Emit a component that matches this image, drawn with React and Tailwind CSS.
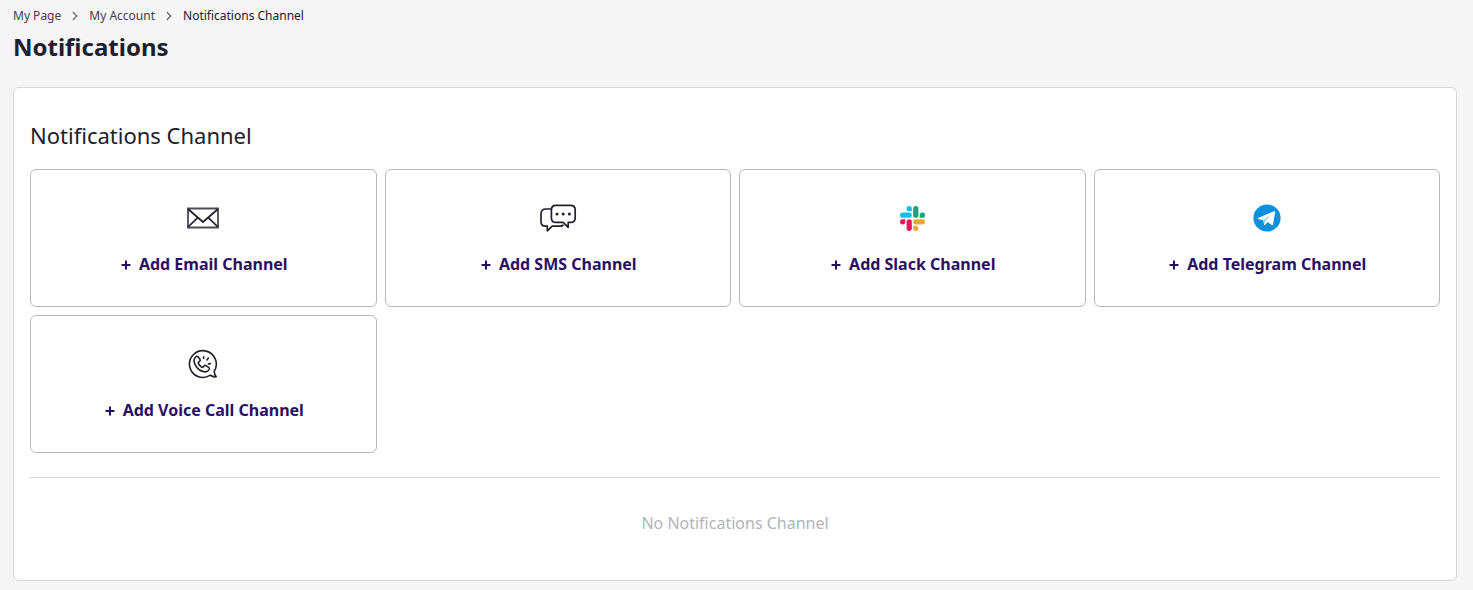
import React from "react";

function EmailIcon() {
  return (
    <svg width="34" height="24" viewBox="0 0 34 24" fill="none" aria-hidden="true">
      <path d="M2 2.500h30v19H2z" stroke="#4a4a55" strokeWidth="1.800" />
      <path
        d="M2 3l15 13L32 3M2 21l9.500-9.200M32 21l-9.500-9.200"
        stroke="#20202c"
        strokeWidth="1.700"
        strokeLinejoin="round"
      />
    </svg>
  );
}

function SmsIcon() {
  return (
    <svg
      width="38"
      height="30"
      viewBox="0 0 38 30"
      fill="none"
      stroke="#20202c"
      strokeWidth="1.700"
      strokeLinecap="round"
      strokeLinejoin="round"
      aria-hidden="true"
    >
      <path d="M12 6H7C3.500 6 2 7.800 2 11v7.500C2 21.500 3.500 23.200 6.500 23.200h1.800v4.600l5-4.600H21c1.300 0 2.200-.4 3-1" />
      <path d="M17 2.400h14.500c3.200 0 4.700 1.700 4.700 4.500v8c0 2.900-1.600 4.500-4.700 4.500h-2.300v4.900l-5-4.900H17c-3.100 0-4.600-1.600-4.600-4.500v-8c0-2.800 1.500-4.500 4.600-4.500z" />
      <g fill="#20202c" stroke="none">
        <circle cx="18" cy="11" r="1.500" />
        <circle cx="24.200" cy="11" r="1.500" />
        <circle cx="30.400" cy="11" r="1.500" />
      </g>
    </svg>
  );
}

function SlackIcon() {
  return (
    <svg width="25" height="25" viewBox="0 0 24 24" aria-hidden="true">
      <path
        fill="#e8175d"
        d="M5.042 15.165a2.528 2.528 0 0 1-2.520 2.523A2.528 2.528 0 0 1 0 15.165a2.527 2.527 0 0 1 2.522-2.520h2.520v2.520zM6.313 15.165a2.527 2.527 0 0 1 2.521-2.520 2.527 2.527 0 0 1 2.521 2.520v6.313A2.528 2.528 0 0 1 8.834 24a2.528 2.528 0 0 1-2.521-2.522v-6.313z"
      />
      <path
        fill="#12bfe8"
        d="M8.834 5.042a2.528 2.528 0 0 1-2.521-2.520A2.528 2.528 0 0 1 8.834 0a2.528 2.528 0 0 1 2.521 2.522v2.520H8.834zM8.834 6.313a2.528 2.528 0 0 1 2.521 2.521 2.528 2.528 0 0 1-2.521 2.521H2.522A2.528 2.528 0 0 1 0 8.834a2.528 2.528 0 0 1 2.522-2.521h6.312z"
      />
      <path
        fill="#0ea97a"
        d="M18.956 8.834a2.528 2.528 0 0 1 2.522-2.521A2.528 2.528 0 0 1 24 8.834a2.528 2.528 0 0 1-2.522 2.521h-2.522V8.834zM17.688 8.834a2.528 2.528 0 0 1-2.523 2.521 2.527 2.527 0 0 1-2.520-2.521V2.522A2.527 2.527 0 0 1 15.165 0a2.528 2.528 0 0 1 2.523 2.522v6.312z"
      />
      <path
        fill="#eca833"
        d="M15.165 18.956a2.528 2.528 0 0 1 2.523 2.522A2.528 2.528 0 0 1 15.165 24a2.527 2.527 0 0 1-2.520-2.522v-2.522h2.520zM15.165 17.688a2.527 2.527 0 0 1-2.520-2.523 2.526 2.526 0 0 1 2.520-2.520h6.313A2.527 2.527 0 0 1 24 15.165a2.528 2.528 0 0 1-2.522 2.523h-6.313z"
      />
    </svg>
  );
}

function TelegramIcon() {
  return (
    <svg width="28" height="28" viewBox="0 0 28 28" aria-hidden="true">
      <circle cx="14" cy="14" r="13.600" fill="#0a90dc" />
      <path
        fill="#fff"
        d="M5.200 14 L21.400 7.100 C22 6.900 22.300 7.200 22.200 7.800 L20 20.600 C19.900 21.200 19.400 21.400 18.900 21.100 L14.500 18 L12.300 20.700 C11.900 21.200 11.200 21 11.100 20.400 L10.200 16.300 L5.300 15 C4.600 14.800 4.600 14.300 5.200 14z"
      />
      <path fill="#8fcdf0" d="M10.200 16.300l8.500-6.300-6.500 7-.8 3.800z" />
    </svg>
  );
}

function VoiceCallIcon() {
  return (
    <svg
      width="30"
      height="30"
      viewBox="0 0 30 30"
      fill="none"
      stroke="#20202c"
      strokeWidth="1.600"
      strokeLinecap="round"
      strokeLinejoin="round"
      aria-hidden="true"
    >
      <path d="M26.200 22.200A13.400 13.400 0 1 0 22.300 26.200c1.500 1.300 3.700 1.900 5.900 1.600-1.200-1.500-1.900-3.600-2-5.600z" />
      <path d="M7.500 8.200c-1.800 1.800-1.800 4.400-.6 7 2 4.200 5.400 7 9.200 7.600 2.400.3 4.200-.6 5.100-2.300.5-.9.2-1.600-.5-2.100l-2.600-1.700c-.8-.5-1.600-.4-2.100.3l-.8 1c-.4.5-1 .5-1.600.1-1.500-1-2.600-2.300-3.200-3.700-.2-.6-.1-1.100.4-1.500l.8-.6c.7-.5.8-1.300.3-2.100L10.300 8c-.7-1-1.900-.9-2.800.2z" />
      <path d="M15.600 7.800v1.700M20.500 9l-1.600 2M22.400 14.600l-1.900.3" />
    </svg>
  );
}

const channels = [
  { name: "Email", Icon: EmailIcon },
  { name: "SMS", Icon: SmsIcon },
  { name: "Slack", Icon: SlackIcon },
  { name: "Telegram", Icon: TelegramIcon },
  { name: "Voice Call", Icon: VoiceCallIcon },
];

function PlusIcon() {
  return (
    <svg width="10" height="12" viewBox="0 0 10 12" stroke="#2b0f63" strokeWidth="2" aria-hidden="true">
      <path d="M5 2.500v9M.5 7h9" />
    </svg>
  );
}

function Separator() {
  return (
    <svg width="6" height="10" viewBox="0 0 6 10" fill="none" stroke="#6b6b78" strokeWidth="1.300" aria-hidden="true">
      <path d="M.8 1l4 4-4 4" />
    </svg>
  );
}

function ChannelCard({ name, Icon }) {
  return (
    <button
      type="button"
      className="flex flex-col items-center gap-[18px] rounded-md border border-[#b8b8b8] bg-white pt-8 pb-[30px] text-base leading-6 font-bold text-[#2b0f63]"
    >
      <span className="flex h-8 items-center">
        <Icon />
      </span>
      <span className="flex items-center gap-2 pl-0.5">
        <PlusIcon />
        Add {name} Channel
      </span>
    </button>
  );
}

export default function App() {
  return (
    <div className="min-h-screen bg-[#f5f5f5] pt-2 pr-4 pb-2 pl-[13px] font-['Noto_Sans',sans-serif] text-[#20202c]">
      <nav aria-label="Breadcrumb">
        <ol className="flex items-center gap-[11px] text-xs leading-4 text-[#40404f]">
          <li>
            <a href="#my-page">My Page</a>
          </li>
          <li aria-hidden="true">
            <Separator />
          </li>
          <li>
            <a href="#my-account">My Account</a>
          </li>
          <li aria-hidden="true">
            <Separator />
          </li>
          <li aria-current="page" className="text-[#20202c]">
            Notifications Channel
          </li>
        </ol>
      </nav>
      <h1 className="mt-[7px] text-2xl leading-8 font-bold">Notifications</h1>

      <main className="mt-6 rounded-md border border-[#d6d6d6] bg-white px-4 pt-[31px] pb-[45px]">
        <h2 className="text-[22px] leading-8">Notifications Channel</h2>
        <div className="mt-[18px] grid grid-cols-4 gap-2">
          {channels.map((channel) => (
            <ChannelCard key={channel.name} {...channel} />
          ))}
        </div>
        <hr className="mt-6 border-[#d6d6d6]" />
        <p className="mt-[33px] text-center text-base leading-6 text-[#b3b3b7]">No Notifications Channel</p>
      </main>
    </div>
  );
}
